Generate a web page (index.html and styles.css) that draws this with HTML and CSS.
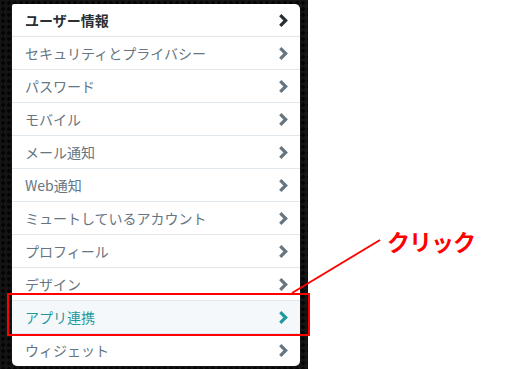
FILE: index.html
```html
<!DOCTYPE html>
<html lang="ja">
<head>
  <meta charset="UTF-8">
  <meta name="viewport" content="width=device-width, initial-scale=1.0">
  <title>設定</title>
<link rel="stylesheet" href="styles.css">
</head>
<body>
  <div class="page">
    <div class="side">
      <ul class="menu">
        <li class="item active-top"><span>ユーザー情報</span><svg class="chev" viewBox="0 0 10 14"><path d="M2 2 L7 7 L2 12" /></svg></li>
        <li class="item"><span>セキュリティとプライバシー</span><svg class="chev" viewBox="0 0 10 14"><path d="M2 2 L7 7 L2 12" /></svg></li>
        <li class="item"><span>パスワード</span><svg class="chev" viewBox="0 0 10 14"><path d="M2 2 L7 7 L2 12" /></svg></li>
        <li class="item"><span>モバイル</span><svg class="chev" viewBox="0 0 10 14"><path d="M2 2 L7 7 L2 12" /></svg></li>
        <li class="item"><span>メール通知</span><svg class="chev" viewBox="0 0 10 14"><path d="M2 2 L7 7 L2 12" /></svg></li>
        <li class="item"><span>Web通知</span><svg class="chev" viewBox="0 0 10 14"><path d="M2 2 L7 7 L2 12" /></svg></li>
        <li class="item"><span>ミュートしているアカウント</span><svg class="chev" viewBox="0 0 10 14"><path d="M2 2 L7 7 L2 12" /></svg></li>
        <li class="item"><span>プロフィール</span><svg class="chev" viewBox="0 0 10 14"><path d="M2 2 L7 7 L2 12" /></svg></li>
        <li class="item"><span>デザイン</span><svg class="chev" viewBox="0 0 10 14"><path d="M2 2 L7 7 L2 12" /></svg></li>
        <li class="item selected"><span>アプリ連携</span><svg class="chev" viewBox="0 0 10 14"><path d="M2 2 L7 7 L2 12" /></svg></li>
        <li class="item last"><span>ウィジェット</span><svg class="chev" viewBox="0 0 10 14"><path d="M2 2 L7 7 L2 12" /></svg></li>
      </ul>
    </div>

    <!-- annotation -->
    <div class="mark-box"></div>
    <svg class="mark-line" width="506" height="369"><line x1="292" y1="293" x2="380" y2="240" /></svg>
    <div class="mark-text">クリック</div>
  </div>
</body>
</html>
```

FILE: styles.css
```css
body {
  margin: 0;
  padding: 0;
  background-color: #fff;
  font-family: "Noto Sans CJK JP", "Noto Sans", sans-serif;
}

.page {
  position: relative;
  width: 506px;
  height: 369px;
  overflow: hidden;
}

.side {
  width: 308px;
  height: 369px;
  padding: 4px 0 0 12px;
  box-sizing: border-box;
  background-color: #141414;
  background-image: radial-gradient(circle, #050505 1.6px, transparent 2px);
  background-size: 6px 6px;
}

.menu {
  list-style: none;
  margin: 0;
  padding: 0;
  width: 288px;
  background-color: #fff;
  border-radius: 2px 5px 5px 5px;
  overflow: hidden;
}

.item {
  display: flex;
  align-items: center;
  justify-content: space-between;
  height: 32px;
  padding: 0 11px 0 13px;
  border-bottom: 1px solid #e1e8ed;
  font-size: 14px;
  color: #66757f;
}

.item span {
  line-height: 1;
}

.item.last {
  border-bottom: none;
}

.active-top {
  color: #292f33;
  font-weight: bold;
}

.chev {
  width: 11px;
  height: 15px;
}

.chev path {
  fill: none;
  stroke: #66757f;
  stroke-width: 3;
}

.active-top .chev path {
  stroke: #292f33;
}

.selected {
  background-color: #f5f8fa;
  color: #1e9a9e;
}

.selected .chev path {
  stroke: #1e9a9e;
}

.mark-box {
  position: absolute;
  left: 7px;
  top: 293px;
  width: 299px;
  height: 39px;
  border: 2px solid #ff0000;
}

.mark-line {
  position: absolute;
  left: 0;
  top: 0;
}

.mark-line line {
  stroke: #ff0000;
  stroke-width: 2;
}

.mark-text {
  position: absolute;
  left: 387px;
  top: 224px;
  font-size: 23px;
  font-weight: bold;
  color: #ff0000;
  letter-spacing: -1px;
}
```
